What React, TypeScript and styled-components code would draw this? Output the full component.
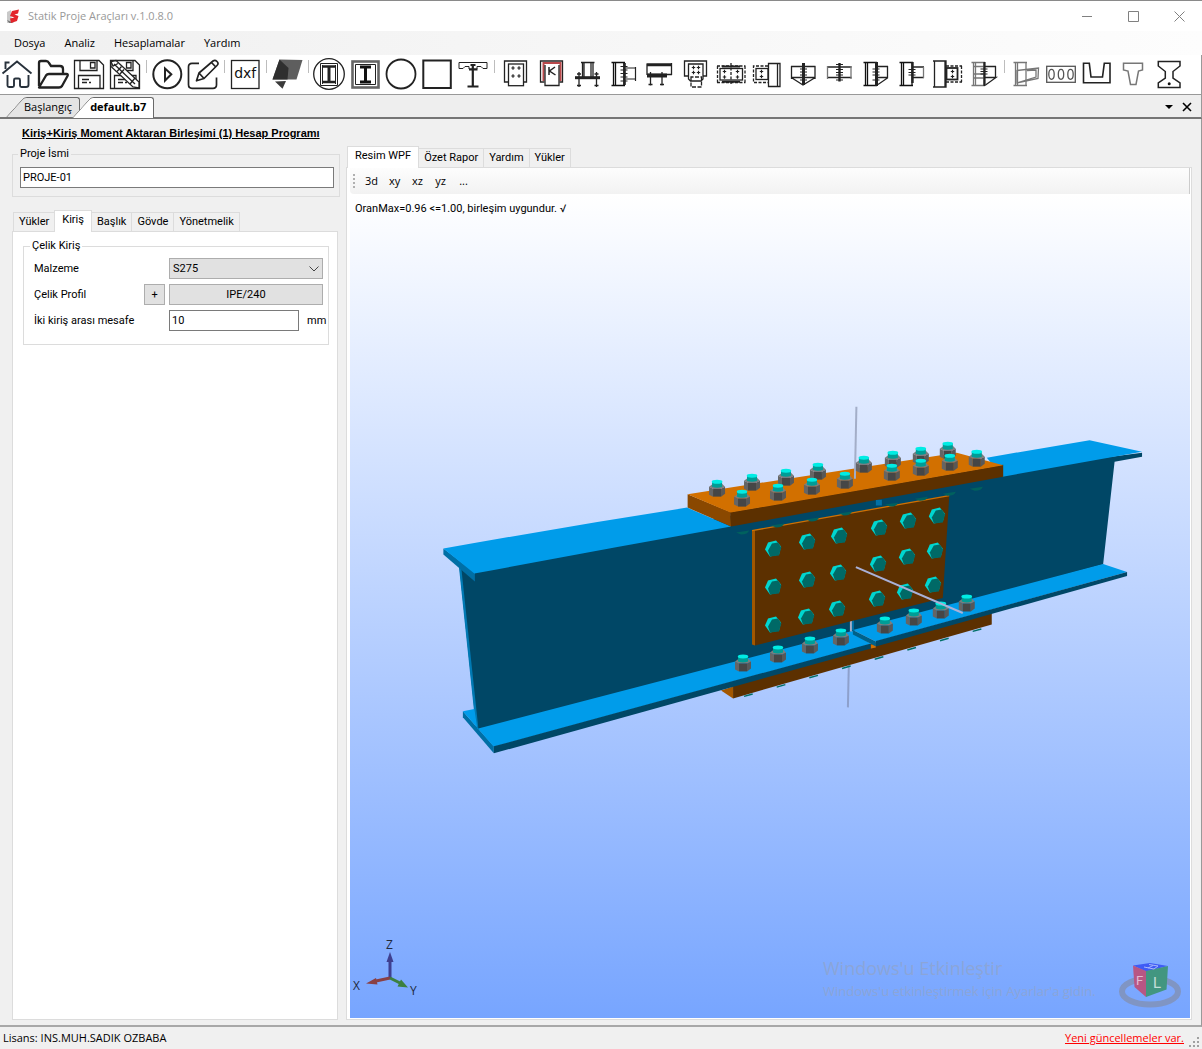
import React from "react";
import styled, { createGlobalStyle, css } from "styled-components";

const Global = createGlobalStyle`
  * { box-sizing: border-box; }
  body { margin: 0; background: #f0f0f0; }
  button, input, select { font: inherit; color: inherit; margin: 0; }
`;

const UI_FONT = `"Open Sans", "Noto Sans", sans-serif`;
const FORM_FONT = `Roboto, "Liberation Sans", sans-serif`;

/* ---------- window frame ---------- */

const Window = styled.div`
  display: flex;
  flex-direction: column;
  min-height: 100vh;
  border-top: 1px solid #8a8a8a;
  background: #f0f0f0;
  color: #000;
  font: 11px/14px ${FORM_FONT};
`;

const TitleBar = styled.header`
  display: flex;
  align-items: center;
  height: 30px;
  padding-left: 6px;
  background: #fff;
  color: #999;
  font: 11px/16px ${UI_FONT};
`;

const AppTitle = styled.h1`
  flex: 1;
  margin: 0 0 0 8px;
  font: inherit;
`;

const CaptionButton = styled.button`
  display: grid;
  place-items: center;
  width: 46px;
  height: 30px;
  padding: 0;
  border: 0;
  background: none;
  color: #808080;
`;

const MenuBar = styled.nav`
  display: flex;
  align-items: center;
  height: 24px;
  padding-left: 6px;
  background: linear-gradient(90deg, #f0f0f0, #fdfdfd);
  font: 11px/16px ${UI_FONT};
`;

const MenuItem = styled.button`
  padding: 0 8px;
  margin-right: 3px;
  border: 0;
  background: none;
`;

const ToolBar = styled.div`
  display: flex;
  gap: 2px;
  height: 40px;
  padding-top: 2px;
  overflow: hidden;
  background: #fff;
  border-bottom: 1px solid #999;
  border-right: 1px solid #999;
`;

const ToolButton = styled.button`
  flex: none;
  width: 34px;
  height: 34px;
  padding: 0;
  border: 0;
  background: none;

  svg { display: block; }
`;

const Separator = styled.span`
  flex: none;
  width: 4px;
  height: 13px;
  margin-top: 3px;
  background: linear-gradient(#bdbdbd, #bdbdbd) 2px 0 / 1px 100% no-repeat;
`;

/* ---------- document tabs ---------- */

const DocStrip = styled.div`
  display: flex;
  align-items: flex-end;
  height: 24px;
  padding-left: 6px;
  border-bottom: 2px solid #757575;
  border-right: 1px solid #999;
  background: #eee;
  font: 11px/16px ${UI_FONT};
`;

const DocTab = styled.button<{ $active?: boolean }>`
  position: relative;
  isolation: isolate;
  height: 20px;
  padding: 0 8px 0 18px;
  margin-right: -8px;
  border: 0;
  background: none;
  font-weight: ${(p) => (p.$active ? 700 : 400)};
  line-height: 18px;
  z-index: ${(p) => (p.$active ? 2 : 1)};

  &::before,
  &::after {
    content: "";
    position: absolute;
    z-index: -1;
    top: 0;
    bottom: ${(p) => (p.$active ? "-1px" : "0")};
    background: ${(p) => (p.$active ? "#fff" : "#e4e4e4")};
    border-top: 1px solid #696969;
  }
  &::before {
    left: 0;
    width: 24px;
    border-left: 1px solid #696969;
    border-top-left-radius: 3px;
    transform: skewX(-42deg);
    transform-origin: bottom;
  }
  &::after {
    left: 24px;
    right: 0;
    border-right: 1px solid #696969;
    border-top-right-radius: 3px;
  }
`;

const DocActions = styled.div`
  display: flex;
  gap: 6px;
  margin-left: auto;
  padding: 0 8px 4px 0;
`;

const PlainButton = styled.button`
  display: grid;
  place-items: center;
  width: 12px;
  height: 12px;
  padding: 0;
  border: 0;
  background: none;
`;

/* ---------- work area ---------- */

const WorkArea = styled.main`
  flex: 1;
  display: grid;
  grid-template-columns: 328px minmax(0, 1fr);
  gap: 6px;
  padding: 6px 9px 5px 12px;
  border-right: 1px solid #999;
  border-bottom: 2px solid #a8a8a8;
`;

const Side = styled.section`
  display: flex;
  flex-direction: column;
`;

const ProgramTitle = styled.h2`
  margin: 0 0 0 10px;
  font: bold 11px/16px "Liberation Sans", sans-serif;
  text-decoration: underline;
  white-space: nowrap;
`;

const Group = styled.fieldset`
  min-width: 0;
  margin: 0;
  padding: 0 5px 8px 7px;
  border: 1px solid #dcdcdc;

  legend {
    padding: 0 2px;
    line-height: 14px;
  }
`;

const ProjectGroup = styled(Group)`
  margin-top: 6px;
  legend { margin-left: -2px; }
`;

const TextBox = styled.input`
  display: block;
  width: 100%;
  height: 21px;
  padding: 0 2px;
  border: 1px solid #7a7a7a;
  border-radius: 0;
  background: #fff;
`;

const ProjectBox = styled(TextBox)`
  margin-top: 6px;
`;

const Tabs = styled.div`
  display: flex;
  align-items: flex-end;
  height: 21px;
  padding-left: 2px;
`;

const Tab = styled.button<{ $active?: boolean }>`
  position: relative;
  height: 19px;
  padding: 0 5px;
  margin-left: -1px;
  border: 1px solid #dcdcdc;
  border-bottom: 0;
  background: #f0f0f0;
  white-space: nowrap;

  ${(p) =>
    p.$active &&
    css`
      height: 22px;
      margin-bottom: -1px;
      padding: 0 7px 3px;
      background: #fff;
      z-index: 1;
    `}
`;

const SideTabs = styled(Tabs)`
  margin-top: 13px;
`;

const SidePanel = styled.div`
  flex: 1;
  margin-right: 2px;
  padding: 7px 8px 8px 10px;
  border: 1px solid #dcdcdc;
  background: #fff;
`;

const BeamGroup = styled(Group)`
  padding: 0 5px 13px 10px;
  legend { margin-left: -4px; }
`;

const FieldRow = styled.div`
  display: grid;
  grid-template-columns: 106px 21px 1fr;
  column-gap: 4px;
  align-items: center;
  margin-top: 5px;

  & + & { margin-top: 5px; }
`;

const FieldValue = styled.div`
  grid-column: 3;
  display: flex;
  align-items: center;
  gap: 8px;
`;

const SelectWrap = styled.div`
  position: relative;
  flex: 1;

  svg {
    position: absolute;
    right: 4px;
    top: 8px;
    pointer-events: none;
  }
`;

const Select = styled.select`
  appearance: none;
  display: block;
  width: 100%;
  height: 21px;
  padding: 0 3px;
  border: 1px solid #adadad;
  border-radius: 0;
  background: #e1e1e1;
`;

const PushButton = styled.button<{ $wide?: boolean }>`
  width: ${(p) => (p.$wide ? "100%" : "21px")};
  height: 21px;
  padding: 0;
  border: 1px solid #adadad;
  background: #e1e1e1;
`;

const GapBox = styled(TextBox)`
  width: 130px;
`;

/* ---------- viewer ---------- */

const Viewer = styled.section`
  display: flex;
  flex-direction: column;
  padding-top: 21px;
`;

const ViewPanel = styled.div`
  flex: 1;
  display: flex;
  flex-direction: column;
  padding: 0 1px 1px 3px;
  border: 1px solid #dcdcdc;
  background: #fff;
`;

const ViewStrip = styled.div`
  display: flex;
  align-items: center;
  height: 26px;
  padding-left: 3px;
  background: linear-gradient(#fdfdfd, #f2f2f2);
  border-radius: 0 0 0 4px;
  border-right: 1px solid #ccc;
  font: 11px/16px ${UI_FONT};
`;

const Grip = styled.span`
  width: 2px;
  height: 14px;
  margin-right: 5px;
  background: repeating-linear-gradient(#b0b0b0 0 2px, transparent 2px 4px);
`;

const ViewButton = styled.button`
  min-width: 23px;
  padding: 0 5px;
  border: 0;
  background: none;
`;

const Viewport = styled.div`
  position: relative;
  flex: 1;
  min-height: 400px;
  padding: 8px 5px;
  overflow: hidden;
  background: linear-gradient(#fff, #77a5ff);
`;

const Verdict = styled.p`
  position: relative;
  margin: 0;
  z-index: 1;
`;

const Scene = styled.svg`
  position: absolute;
  inset: 0;
  width: 100%;
  height: 100%;
`;

const AxisTriad = styled.svg`
  position: absolute;
  left: 0;
  bottom: 18px;
  font: 12px ${UI_FONT};
`;

const ViewCube = styled.svg`
  position: absolute;
  right: 8px;
  bottom: 8px;
  font: 15px ${FORM_FONT};
`;

const Watermark = styled.div`
  position: absolute;
  right: 69px;
  bottom: 17px;
  width: 298px;
  white-space: nowrap;
  color: #8ba5d8;
  font: 13px/20px ${UI_FONT};

  strong {
    display: block;
    font-weight: 400;
    font-size: 18px;
    line-height: 26px;
  }
`;

/* ---------- status bar ---------- */

const StatusBar = styled.footer`
  display: flex;
  align-items: center;
  height: 22px;
  padding: 0 3px;
  font: 11px/16px ${UI_FONT};

  a {
    margin-left: auto;
    color: #f00;
  }
  svg {
    align-self: flex-end;
    margin: 0 0 2px 5px;
  }
`;

/* ---------- toolbar glyphs ---------- */

const Floppy = () => (
  <>
    <path d="M2.5 3.5H27L31.5 8V31.5H2.5Z" />
    <path d="M8 3.5V13.5H25V3.5M18.5 5.5H23V11H18.5Z" />
    <path d="M6.5 31.5V18.5H28V31.5M10 22.5H17M10 25.5H15M17 25.5H19" />
  </>
);

const ISection = () => (
  <g>
    <path d="M11 9.5H23M11 25H23" strokeWidth="2.4" />
    <path d="M17 9V25" strokeWidth="3" />
  </g>
);

const Dots = ({ xs, ys }: { xs: number[]; ys: number[] }) => (
  <>
    {xs.map((x) =>
      ys.map((y) => (
        <path key={`${x}-${y}`} d={`M${x - 1.7} ${y}h3.4M${x} ${y - 1.7}v3.4`} strokeWidth="1.2" />
      ))
    )}
  </>
);

const Column = ({ grey }: { grey?: boolean }) => (
  <g stroke={grey ? "#777" : "#111"}>
    <path d="M5.5 5.5H19M5.5 28.5H19" />
    <path d="M7.5 5V29M9.5 5V29M18 5V29" />
  </g>
);

const BoltTicks = ({ x, ys }: { x: number; ys: number[] }) => (
  <>
    {ys.map((y) => (
      <path key={y} d={`M${x - 3.5} ${y}h7`} strokeWidth="1" />
    ))}
  </>
);

type Tool = { name: string; art: React.ReactNode } | null;

const tools: Tool[] = [
  {
    name: "Ana sayfa",
    art: (
      <g stroke="#28323c" strokeWidth="1.9">
        <path d="M2.5 16.5L17 4.5L31.5 16.5" />
        <path d="M5.5 12V5.5H9.5" />
        <path d="M7.5 18V28.5Q7.5 30 9 30H12.500Q14 30 14 28.500V23Q14 21.500 15.500 21.500H18.500Q20 21.500 20 23V28.500Q20 30 21.500 30H26Q28.500 30 28.500 28V18" />
      </g>
    ),
  },
  {
    name: "Aç",
    art: (
      <path
        strokeWidth="2.3"
        strokeLinejoin="round"
        d="M3 29V6Q3 4 5 4H10Q12 4 13 6L15 9H24Q27 9 27 12V16.500M3 30.500L10 18.500Q11 17 13 17H30.500Q32.500 17 31.500 19L26 29Q25 30.500 23 30.500Z"
      />
    ),
  },
  { name: "Kaydet", art: <Floppy /> },
  {
    name: "Farklı kaydet",
    art: (
      <>
        <Floppy />
        <path fill="#fff" d="M3 4.500L8 3.500L31 25L31 31L25 30L3 9.500Z" />
        <path d="M3 4.500L5 9L10 6.500M9 14.500L13.500 9.500M12 17L16 12.500M22 27L27 21M6 7L27 27" />
      </>
    ),
  },
  null,
  {
    name: "Hesapla",
    art: (
      <g strokeWidth="2">
        <circle cx="17.300" cy="17.300" r="14" />
        <path d="M15 11.500L21.300 17.300L15 23.500Z" />
      </g>
    ),
  },
  {
    name: "Düzenle",
    art: (
      <g strokeWidth="1.700" strokeLinejoin="round">
        <path d="M13 6.300H6Q2.500 6.300 2.500 10V27.500Q2.500 31.300 6 31.300H27Q30.500 31.300 30.500 28V20.500" />
        <path d="M10.500 23.800L13 16L27 4Q29 2.500 31 4.500Q33 6.500 31 8.500L18 21.500ZM13 16L18 21.500M25.500 5.500L29.800 10" />
      </g>
    ),
  },
  null,
  {
    name: "DXF",
    art: (
      <>
        <rect x="3.500" y="3.500" width="27.500" height="28" />
        <text x="17.200" y="21" textAnchor="middle" stroke="none" fill="#111" fontSize="14" fontFamily="DejaVu Sans, sans-serif">
          dxf
        </text>
      </>
    ),
  },
  null,
  {
    name: "Levha",
    art: (
      <g stroke="none">
        <path fill="#5e5e5e" d="M9.500 2.500L32.500 3L26.500 22.500H2.500Z" />
        <path fill="#2f2f2f" d="M9.500 2.500L18.500 11L17.500 22.500H2.500Z" />
        <path fill="#3a3a3a" d="M5 24.500L16 24L12.500 31.800Z" />
      </g>
    ),
  },
  null,
  {
    name: "Dairesel kesitli kompozit",
    art: (
      <>
        <circle cx="17" cy="17" r="15.300" />
        <path strokeWidth="1" d="M8.500 6.500H25.500V28.500H8.500ZM10.500 8V27M23.500 8V27" />
        <ISection />
      </>
    ),
  },
  {
    name: "Dikdörtgen kesitli kompozit",
    art: (
      <>
        <rect x="4.500" y="4.500" width="26" height="26" stroke="#666" strokeWidth="2.600" />
        <path strokeWidth="1" d="M7.500 7.500H27.500V27.500H7.500Z" />
        <path stroke="#111" strokeWidth="3" d="M12 10H23M12 25H23M17.500 10V25" />
      </>
    ),
  },
  { name: "Daire kesit", art: <circle cx="17" cy="17" r="14.500" strokeWidth="1.800" /> },
  { name: "Kare kesit", art: <rect x="3.300" y="3.500" width="27.500" height="27.500" strokeWidth="2" /> },
  {
    name: "Kompozit kiriş",
    art: (
      <>
        <path strokeWidth="1" d="M3 5.500H31V11.500H27L25 9.500H21V12H13V9.500H9L7 11.500H3Z" />
        <path strokeWidth="2.200" d="M16.800 7.500V29M13 12.500H21.500M11.500 29.500H22.500" />
        <path d="M14.500 8H19.500" strokeWidth="2" />
      </>
    ),
  },
  null,
  {
    name: "Levha birleşimi",
    art: (
      <>
        <path d="M10.500 25H6.500V4H28.500V25H25.500" />
        <rect x="10.500" y="7" width="15" height="21.700" />
        <Dots xs={[15, 21]} ys={[11, 19]} />
      </>
    ),
  },
  {
    name: "Kaynaklı birleşim",
    art: (
      <>
        <path d="M10.500 25H6.500V4H28.500V25H25.500" />
        <path d="M9.500 24V6H26.500V24" stroke="#b9494b" strokeWidth="2" />
        <path d="M11 8V28.500H25V8" />
        <path strokeWidth="1.500" d="M15 10V18M21 10L15.500 14L21.500 18" />
      </>
    ),
  },
  {
    name: "Kolon ayağı",
    art: (
      <>
        <path d="M11 5.500H24.500M12.500 5V20M14 5V20M21 5V20M23 5V20M9 15V30M26.500 15V30M7 17H11M24.500 17H28.500M7 28.500H11M24.500 28.500H28.500" />
        <path strokeWidth="3" d="M5 20.700H30" />
      </>
    ),
  },
  {
    name: "Kolon kiriş alın levhalı",
    art: (
      <>
        <Column />
        <path strokeWidth="2.600" d="M18.500 6V28" />
        <path d="M20 11H30M20 22H30M29.500 10V24" strokeWidth="1.200" />
        <BoltTicks x={18} ys={[9.500, 13, 16.500, 20, 24]} />
      </>
    ),
  },
  {
    name: "Kiriş mesnet",
    art: (
      <>
        <path d="M4.500 7H30M4.500 8.500H30M29.500 6V18M5 7V18M6 17.500H30M8.500 15V28.500M20 15V28.500M6.500 27.500H10.500M18 27.500H22" />
        <path strokeWidth="4" d="M5 18.500H25" />
      </>
    ),
  },
  {
    name: "Çapraz levha",
    art: (
      <>
        <path d="M10.500 19H6.500V4H28.500V19H25" />
        <path d="M10.500 7H25V22L23 24H12.500L10.500 22Z" />
        <Dots xs={[15.500, 20.500]} ys={[10.500, 15.500]} />
        <path strokeDasharray="4 1.500" d="M13 20V30H23.500V20Z" />
      </>
    ),
  },
  {
    name: "Kiriş eki",
    art: (
      <>
        <path strokeDasharray="3 1.500" d="M3 9H31.500M3 25.500H31.500M3.500 9V25.500M31 9V25.500M17 6V28" />
        <path d="M8 9.500H26M8 24.800H26" strokeWidth="2" />
        <rect x="6" y="11.500" width="22.500" height="11.500" />
        <Dots xs={[10.500, 23.500]} ys={[14.500, 20]} />
      </>
    ),
  },
  {
    name: "Kayma levhası",
    art: (
      <>
        <path strokeDasharray="3 1.500" d="M18 9H3.500V25.500H18" />
        <rect x="6" y="11.500" width="12" height="11" />
        <Dots xs={[11.500]} ys={[14.500, 19.500]} />
        <path d="M18.500 6.500H30V29.500H18.500ZM27.500 6.500V29.500" />
      </>
    ),
  },
  {
    name: "Guseli kiriş eki",
    art: (
      <>
        <path d="M5 9.500H29.500M5 20.500H29.500M5.500 9V22M29 9V22M6 21L17 28L28.500 21" />
        <path strokeWidth="3" d="M17.500 6V28" />
        <BoltTicks x={17.500} ys={[12, 15, 18, 23]} />
      </>
    ),
  },
  {
    name: "Alın levhalı kiriş eki",
    art: (
      <>
        <path d="M5 10H29.500M5 20.500H29.500" strokeWidth="1.700" />
        <path d="M5.500 9V22M29 9V22" stroke="#777" />
        <path strokeWidth="2.400" d="M17.500 6V24.500" />
        <BoltTicks x={17.500} ys={[7.500, 12.500, 15.500, 18, 23]} />
      </>
    ),
  },
  {
    name: "Guseli kolon kiriş",
    art: (
      <>
        <Column />
        <path strokeWidth="3" d="M18.500 5V29" />
        <path d="M19 9.500H30M19 20.500H30M29.500 9V21L20 27.500" />
        <BoltTicks x={18} ys={[12, 15, 18, 23]} />
      </>
    ),
  },
  {
    name: "Kolon kiriş moment",
    art: (
      <>
        <Column />
        <path strokeWidth="2.400" d="M18.500 5V26" />
        <path d="M19 10H30M19 20.500H30" strokeWidth="1.700" />
        <path d="M29.500 10V21" stroke="#777" />
        <BoltTicks x={18} ys={[12.500, 15.500, 18]} />
      </>
    ),
  },
  {
    name: "Kolon kiriş kayma",
    art: (
      <>
        <path d="M3 4H16V30H3M4.500 4V30M15 4V30" />
        <rect x="16.500" y="11" width="11" height="11.500" strokeWidth="1.800" />
        <Dots xs={[22.500]} ys={[14.500, 19.500]} />
        <path strokeDasharray="3 1.500" d="M16 9H32M16 25H32M31.500 9V25" />
      </>
    ),
  },
  {
    name: "Takviyeli kolon kiriş",
    art: (
      <>
        <Column grey />
        <path stroke="#777" d="M8 9.500H18M8 17H18M8 21H18" />
        <path strokeWidth="2.200" d="M18.500 5V29" />
        <path d="M19 9.500H30M19 20.500H30L19.500 28M29.500 9V21" />
        <BoltTicks x={18} ys={[12, 14.500, 17]} />
      </>
    ),
  },
  null,
  {
    name: "Değişken kesit",
    art: (
      <>
        <Column grey />
        <path stroke="#777" d="M9 13.500L30.500 11L30 21.500L9 26ZM19 13.500L28 13V20L10 25.500" />
      </>
    ),
  },
  {
    name: "Boşluklu levha",
    art: (
      <g stroke="#555">
        <rect x="2.700" y="9.300" width="28.600" height="16" />
        <ellipse cx="7.500" cy="17.300" rx="2.700" ry="5" />
        <ellipse cx="17" cy="17.300" rx="2.700" ry="5" />
        <ellipse cx="26.500" cy="17.300" rx="2.700" ry="5" />
      </g>
    ),
  },
  {
    name: "U kanal",
    art: <path strokeWidth="1.600" d="M3.500 6.300H9.300L11 20H22.500L24.300 6.300H30V25.700H3.500Z" />,
  },
  {
    name: "T kesit",
    art: <path stroke="#777" strokeWidth="1.500" d="M7.500 6.300H26.500V13L22.500 14L20 27.500H14.500L12 14L7.500 13Z" />,
  },
  {
    name: "Prekast kiriş",
    art: (
      <>
        <path strokeWidth="1.500" d="M6.300 4.500H28V9L21 14.500V21L28 26V30.500H6.300V26L13.300 21V14.500L6.300 9Z" />
        <circle cx="17.200" cy="26.700" r="1.500" fill="#111" stroke="none" />
      </>
    ),
  },
];

/* ---------- steel connection model ---------- */

const topNuts = [
  [948, 452], [921, 457], [893, 461], [864, 466], [818, 473], [786, 479], [752, 484], [717, 490],
  [977, 460], [950, 464], [921, 469], [892, 474], [845, 482], [812, 488], [778, 494], [742, 500],
];
const bottomNuts = [
  [743, 665], [778, 656], [810, 647], [841, 639], [885, 627], [914, 619], [941, 612], [967, 605],
];
const webBolts = [
  [773, 548], [773, 586], [773, 624], [807, 541], [807, 579], [806, 616], [839, 535], [838, 572],
  [837, 608], [879, 527], [878, 563], [877, 598], [908, 520], [907, 556], [905, 591], [937, 515],
  [935, 550], [933, 584],
];
const flangeHeads = [
  [743, 531], [778, 524], [813, 518], [846, 512], [892, 503], [922, 497], [950, 492], [977, 487],
];

const Nut = ({ x, y }: { x: number; y: number }) => (
  <g transform={`translate(${x} ${y})`}>
    <path fill="#7d7d7d" d="M-8-4L-4-7H5L8-4L4-2H-4Z" />
    <path fill="#656565" d="M-8-4L-4-2V6L-8 4Z" />
    <path fill="#464646" d="M-4-2H4V6H-4Z" />
    <path fill="#585858" d="M4-2L8-4V3L4 6Z" />
    <path fill="#009c96" d="M-5-9H5V-4Q0-2-5-4Z" />
    <ellipse cx="0" cy="-9" rx="5.300" ry="2" fill="#00ece4" />
  </g>
);

const HexBolt = ({ x, y }: { x: number; y: number }) => (
  <g transform={`translate(${x} ${y})`}>
    <path fill="#00d6d0" d="M-8 1L-5-6L3-8L8-2L6 6L-3 8Z" />
    <path fill="#006966" d="M-5 2L-1-5L5-6L8.300-1L6 7L-3 8Z" />
  </g>
);

const Model = () => (
  <Scene viewBox="350 193 840 825" aria-label="Kiriş birleşimi 3d modeli" role="img">
    <path stroke="#8da0cc" strokeWidth="2" d="M849 660L848 707" />
    <path fill="#a35700" d="M721 690L733 686V698Z" />
    <path fill="#5c3000" d="M733 682L992 610V624L733 698Z" />
    <path stroke="#006f68" strokeWidth="1.500" strokeDasharray="9 25" d="M744 696L992 625.500" />

    <path fill="#004766" d="M459 566L731 515L1003 470L1142.500 452V456L1115 461L1103.500 564L948 606L853 631L480 730L476 728Z" />
    <path fill="#0079b3" d="M458.500 566L461 568L478 728H475.500Z" />
    <path fill="#006fa5" d="M443 548L474.500 572V581L443 554Z" />
    <path fill="#009cea" d="M443 548Q565 526 687 507L731 526Q602 549 474 573Z" />
    <path fill="#009cea" d="M987 457L1090 439.500L1142.500 451L1003 476Z" />

    <path fill="#006fa5" d="M462.500 711L493.500 746V753L462.500 717Z" />
    <path fill="#009cea" d="M462.500 711L474 708.500L477 728.500L852 630.500L871 643.500L493.500 746.500Z" />
    <path fill="#004766" d="M493.500 746L871 643V648L493.500 753Z" />
    <path fill="#d27000" d="M871 644L876 643V647L871 648Z" />
    <path fill="#009cea" d="M853 629.500L1103.500 563.500L1127.500 571.500L876 641Z" />
    <path fill="#006189" d="M853 629.500L876 641V646L853 634Z" />
    <path fill="#004766" d="M876 640.500L1127.500 571.500V575.500L876 646Z" />
    <path fill="#0071a8" d="M852 619H854V630H852ZM876 499H882V505H876Z" />
    <path stroke="#a5b0ca" strokeWidth="2" d="M851 620V631" />

    <path fill="#a35700" d="M752 529.500L755 530V645L752 644Z" />
    <path fill="#5c3000" d="M755 530L949.500 495L943 597.500L755 645Z" />
    <path stroke="#d27000" strokeWidth="1.300" d="M752 530L949.500 495" />
    {flangeHeads.map(([x, y]) => (
      <path key={x} fill="#00615e" d={`M${x - 7} ${y + 1}L${x + 6} ${y - 1}Q${x + 5} ${y + 3} ${x - 2} ${y + 3}Z`} />
    ))}

    <path fill="#8a4800" d="M687.500 493.500L730.500 511.500L731 526L687.500 507Z" />
    <path fill="#5c3000" d="M730 511.500L1003.500 464V476L731 526Z" />
    <path fill="#d27000" d="M687.500 493.500L957 452L1003.500 464.500L730.500 512Z" />
    <path stroke="#a3aec8" strokeWidth="2" d="M856.500 406L855 478" />

    {topNuts.map(([x, y]) => <Nut key={`${x}-${y}`} x={x} y={y} />)}
    {webBolts.map(([x, y]) => <HexBolt key={`${x}-${y}`} x={x} y={y} />)}
    {bottomNuts.map(([x, y]) => <Nut key={`${x}-${y}`} x={x} y={y} />)}
    <path stroke="#a9b1d8" strokeWidth="2" d="M856 566.500L963 612.500" />
  </Scene>
);

const Triad = () => (
  <AxisTriad width="76" height="64" viewBox="350 936 76 64" fill="#222a3c">
    <path stroke="#3f3f8f" strokeWidth="3" d="M390 978V960" />
    <path fill="#3f3f8f" d="M390 952L393.500 962H386.500Z" />
    <path stroke="#8a4044" strokeWidth="3" d="M390 978L376 981" />
    <path fill="#8a4044" d="M366 983.500L376 978L377.500 984.500Z" />
    <path stroke="#3c8040" strokeWidth="3" d="M390 978L400 983" />
    <path fill="#3c8040" d="M408 987.500L397.500 986.500L401 979.500Z" />
    <text x="386" y="949">Z</text>
    <text x="353" y="990">X</text>
    <text x="410" y="995">Y</text>
  </AxisTriad>
);

const Cube = () => (
  <ViewCube width="64" height="50" viewBox="1118 960 64 50">
    <ellipse cx="1150" cy="991.500" rx="28" ry="13" fill="none" stroke="#8095c3" strokeWidth="6" />
    <path fill="#3f5cf5" d="M1133 965.500L1150 963L1168 966L1146 971.500Z" />
    <path fill="#b85684" d="M1133 965.500L1146 971V997L1134.500 987Z" />
    <path fill="#429680" d="M1146 971L1168 966L1166.500 989.500L1146 997Z" />
    <path stroke="#a9b8fa" fill="none" d="M1144 967L1154 969L1158 966L1149 964.500M1148 968L1153 965.500" />
    <text x="1136" y="985" fill="#e3bcd4" fontSize="13">F</text>
    <text x="1153" y="988" fill="#c4ded8">L</text>
  </ViewCube>
);

export default function App() {
  return (
    <Window>
      <Global />
      <TitleBar>
        <svg width="14" height="15" viewBox="0 0 14 15" aria-hidden="true">
          <path fill="#c9c9c9" d="M1 3L5 1L6 13L1 14Z" />
          <path fill="#777" d="M1 11L8 14H3Z" />
          <path fill="#e3242b" d="M13 .500L6 2L4 7L8.500 8.500L4 9.500L5 14L11 12L12.500 7L8.500 5.500L12 4.500Z" />
        </svg>
        <AppTitle>Statik Proje Araçları v.1.0.8.0</AppTitle>
        <CaptionButton aria-label="Küçült">
          <svg width="11" height="11" stroke="currentColor"><path d="M0 5.500H10" /></svg>
        </CaptionButton>
        <CaptionButton aria-label="Ekranı kapla">
          <svg width="11" height="11" stroke="currentColor" fill="none"><path d="M.5.500H10.500V10.500H.5Z" /></svg>
        </CaptionButton>
        <CaptionButton aria-label="Kapat">
          <svg width="11" height="11" stroke="currentColor"><path d="M.5.500L10.500 10.500M10.500.500L.5 10.500" /></svg>
        </CaptionButton>
      </TitleBar>
      <MenuBar>
        {["Dosya", "Analiz", "Hesaplamalar", "Yardım"].map((m) => <MenuItem key={m}>{m}</MenuItem>)}
      </MenuBar>
      <ToolBar role="toolbar">
        {tools.map((t, i) =>
          t ? (
            <ToolButton key={i} aria-label={t.name}>
              <svg width="34" height="34" viewBox="0 0 34 34" fill="none" stroke="#222" strokeWidth="1.300">
                {t.art}
              </svg>
            </ToolButton>
          ) : (
            <Separator key={i} />
          )
        )}
      </ToolBar>
      <DocStrip>
        <DocTab>Başlangıç</DocTab>
        <DocTab $active>default.b7</DocTab>
        <DocActions>
          <PlainButton aria-label="Sekme listesi">
            <svg width="8" height="4"><path d="M0 0H8L4 4Z" /></svg>
          </PlainButton>
          <PlainButton aria-label="Sekmeyi kapat">
            <svg width="10" height="10" stroke="#000" strokeWidth="1.600"><path d="M1 1L9 9M9 1L1 9" /></svg>
          </PlainButton>
        </DocActions>
      </DocStrip>
      <WorkArea>
        <Side>
          <ProgramTitle>Kiriş+Kiriş Moment Aktaran Birleşimi (1) Hesap Programı</ProgramTitle>
          <ProjectGroup>
            <legend><label htmlFor="project">Proje İsmi</label></legend>
            <ProjectBox id="project" defaultValue="PROJE-01" />
          </ProjectGroup>
          <SideTabs>
            <Tab>Yükler</Tab>
            <Tab $active>Kiriş</Tab>
            <Tab>Başlık</Tab>
            <Tab>Gövde</Tab>
            <Tab>Yönetmelik</Tab>
          </SideTabs>
          <SidePanel>
            <BeamGroup>
              <legend>Çelik Kiriş</legend>
              <FieldRow>
                <label htmlFor="material">Malzeme</label>
                <FieldValue>
                  <SelectWrap>
                    <Select id="material" defaultValue="S275"><option>S275</option></Select>
                    <svg width="10" height="6" fill="none" stroke="#444"><path d="M.5.500L5 5L9.500.500" /></svg>
                  </SelectWrap>
                </FieldValue>
              </FieldRow>
              <FieldRow>
                <label htmlFor="profile">Çelik Profil</label>
                <PushButton aria-label="Profil ekle">+</PushButton>
                <PushButton $wide id="profile">IPE/240</PushButton>
              </FieldRow>
              <FieldRow>
                <label htmlFor="gap">İki kiriş arası mesafe</label>
                <FieldValue>
                  <GapBox id="gap" defaultValue="10" />
                  <span>mm</span>
                </FieldValue>
              </FieldRow>
            </BeamGroup>
          </SidePanel>
        </Side>
        <Viewer>
          <Tabs style={{}}>
            <Tab $active>Resim WPF</Tab>
            <Tab>Özet Rapor</Tab>
            <Tab>Yardım</Tab>
            <Tab>Yükler</Tab>
          </Tabs>
          <ViewPanel>
            <ViewStrip>
              <Grip />
              {["3d", "xy", "xz", "yz", "..."].map((v) => <ViewButton key={v}>{v}</ViewButton>)}
            </ViewStrip>
            <Viewport>
              <Verdict>OranMax=0.96 &lt;=1.00, birleşim uygundur. √</Verdict>
              <Model />
              <Watermark>
                <strong>Windows'u Etkinleştir</strong>
                Windows'u etkinleştirmek için Ayarlar'a gidin.
              </Watermark>
              <Triad />
              <Cube />
            </Viewport>
          </ViewPanel>
        </Viewer>
      </WorkArea>
      <StatusBar>
        <span>Lisans: INS.MUH.SADIK OZBABA</span>
        <a href="#guncelleme">Yeni güncellemeler var.</a>
        <svg width="10" height="10" fill="#a0a0a0" aria-hidden="true">
          <path d="M8 0h2v2h-2zM4 4h2v2h-2zM8 4h2v2h-2zM0 8h2v2h-2zM4 8h2v2h-2zM8 8h2v2h-2z" />
        </svg>
      </StatusBar>
    </Window>
  );
}
